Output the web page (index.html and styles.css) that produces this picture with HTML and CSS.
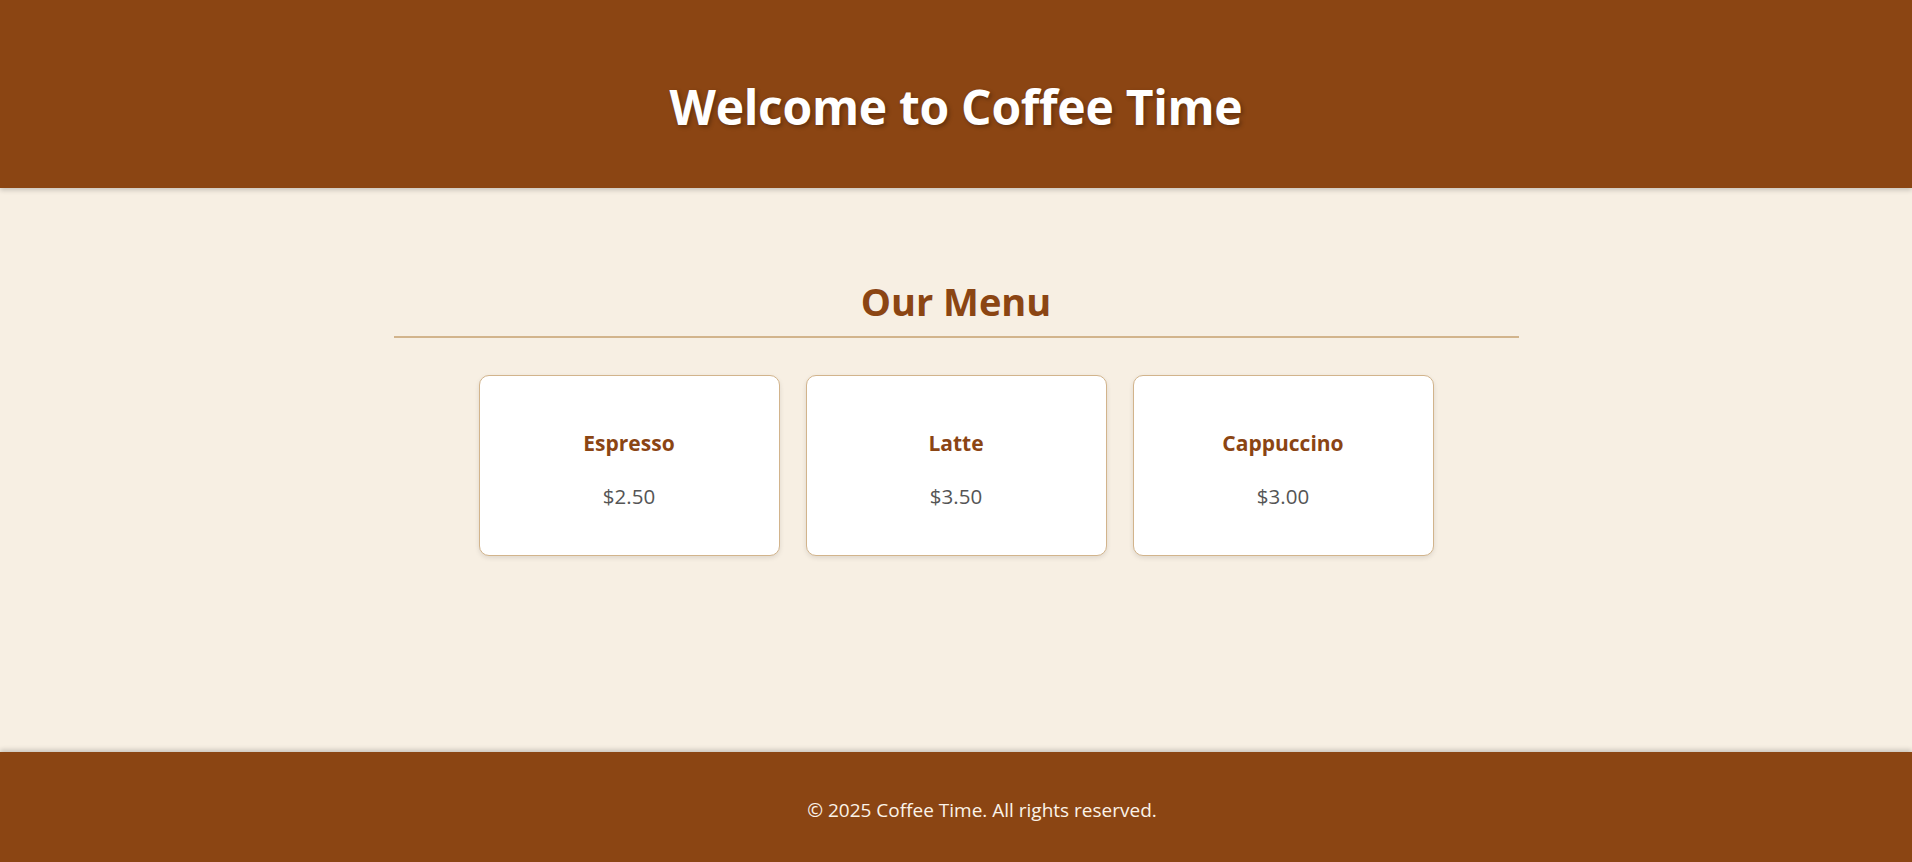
FILE: index.html
```html
<!DOCTYPE html>
<html lang="en">
<head>
<meta charset="utf-8">
<title>Coffee Time</title>
<link rel="stylesheet" href="styles.css">
</head>
<body>
<header class="site-header">
  <h1 class="site-title">Welcome to Coffee Time</h1>
</header>
<main class="content">
  <section class="menu">
    <h2 class="menu-title">Our Menu</h2>
    <div class="menu-items">
      <div class="menu-card">
        <h3 class="item-name">Espresso</h3>
        <p class="item-price">$2.50</p>
      </div>
      <div class="menu-card">
        <h3 class="item-name">Latte</h3>
        <p class="item-price">$3.50</p>
      </div>
      <div class="menu-card">
        <h3 class="item-name">Cappuccino</h3>
        <p class="item-price">$3.00</p>
      </div>
    </div>
  </section>
</main>
<footer class="site-footer">
  <p class="footer-text">© 2025 Coffee Time. All rights reserved.</p>
</footer>
</body>
</html>
```
FILE: styles.css
```css
* { box-sizing: border-box; }
html, body { height: 100%; }
body {
  margin: 0;
  font-family: "Open Sans", "Noto Sans", sans-serif;
  background: #f7efe3;
  color: #333;
  display: flex;
  flex-direction: column;
  min-height: 100vh;
}
.site-header {
  background: #8b4513;
  height: 188px;
  padding-top: 78px;
  text-align: center;
  box-shadow: 0 2px 5px rgba(0,0,0,0.2);
  position: relative;
  z-index: 1;
}
.site-title {
  margin: 0;
  color: #fff;
  font-size: 48px;
  line-height: 1.2;
  font-weight: 700;
  letter-spacing: -0.3px;
  text-shadow: 2px 2px 4px rgba(0,0,0,0.3);
}
.content {
  flex: 1;
}
.menu {
  width: 1125px;
  margin: 0 auto;
  padding-top: 91px;
}
.menu-title {
  margin: 0;
  text-align: center;
  color: #8b4513;
  font-size: 38px;
  line-height: 1.2;
  font-weight: 700;
  padding-bottom: 11px;
  border-bottom: 2px solid #d2b48c;
}
.menu-items {
  display: flex;
  justify-content: center;
  gap: 26px;
  margin-top: 37px;
}
.menu-card {
  width: 301px;
  height: 181px;
  background: #fff;
  border: 1px solid #d2b48c;
  border-radius: 10px;
  box-shadow: 0 2px 5px rgba(0,0,0,0.1);
  text-align: center;
  padding-top: 54px;
}
.item-name {
  margin: 0;
  color: #8b4513;
  font-size: 21px;
  line-height: 1.3;
  font-weight: 700;
}
.item-price {
  margin: 26px 0 0;
  color: #555;
  font-size: 20.5px;
  line-height: 1.3;
}
.site-footer {
  background: #8b4513;
  height: 110px;
  display: flex;
  align-items: center;
  justify-content: center;
  padding-left: 52px;
  box-shadow: 0 -2px 5px rgba(0,0,0,0.2);
  position: relative;
}
.footer-text {
  margin: 6px 0 0;
  color: #fbf3e8;
  font-size: 19px;
}
```
